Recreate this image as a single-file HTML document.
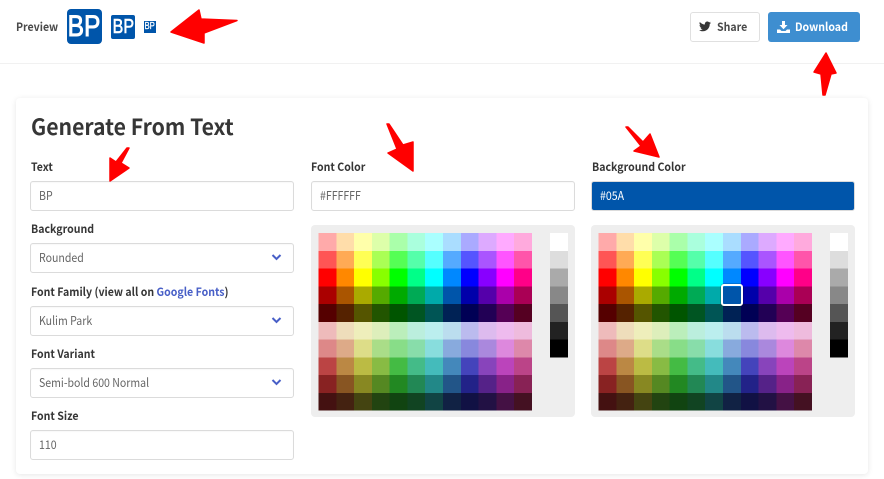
<!DOCTYPE html>
<html><head><meta charset="utf-8">
<style>
html,body{margin:0;padding:0;background:#fff;}
body{width:884px;height:479px;overflow:hidden;position:relative;font-family:"Noto Sans CJK JP","Liberation Sans",sans-serif;color:#363636;}
.a{position:absolute;white-space:nowrap;}
.l,.b{position:absolute;font-size:11.500px;font-weight:700;line-height:16px;color:#363636;white-space:nowrap;transform:scaleX(.92);transform-origin:0 50%;}
.i{position:absolute;box-sizing:border-box;width:263.500px;height:30px;border:1px solid #dbdbdb;border-radius:3px;background:#fff;font-size:12px;line-height:28px;padding-left:8px;color:#666;white-space:nowrap;box-shadow:inset 0 1px 1px rgba(10,10,10,.03);}
.i span{display:inline-block;transform:scaleX(.88);transform-origin:0 50%;}
.logo{position:absolute;background:#05a;color:#fff;font-family:"Liberation Sans",sans-serif;display:flex;align-items:center;justify-content:center;overflow:hidden;}
.logo span{display:block;}
.card{position:absolute;left:16px;top:98px;width:852px;height:376px;background:#fff;border-radius:4px;box-shadow:0 1px 6px rgba(10,10,10,.10);}
.pal{position:absolute;width:264px;height:192px;}
.chev{position:absolute;left:239.500px;top:9px;}
</style></head>
<body>
<div class="a" style="left:0;top:63px;width:884px;height:1px;background:#f1f1f1"></div>
<div class="b" style="left:16px;top:19px;color:#4a4a4a">Preview</div>
<div class="logo" style="left:67px;top:9px;width:35px;height:35px;border-radius:4px;font-size:30px;line-height:35px"><span style="transform:scaleX(.82);-webkit-text-stroke:.9px #fff">BP</span></div>
<div class="logo" style="left:111px;top:15px;width:24px;height:24px;border-radius:2px;font-size:20px;line-height:24px"><span style="transform:scaleX(.8);-webkit-text-stroke:.6px #fff">BP</span></div>
<div class="logo" style="left:144px;top:21px;width:12px;height:12px;font-size:10px;line-height:12px"><span style="transform:scaleX(.78);-webkit-text-stroke:.3px #fff">BP</span></div>

<div class="a" style="left:690px;top:12px;width:70px;height:30px;box-sizing:border-box;border:1px solid #e0e0e0;border-radius:3px;background:#fff"></div>
<svg class="a" style="left:699px;top:21px" width="12" height="11" viewBox="0 0 24 20"><path fill="#363636" d="M24 2.400c-.9.400-1.800.700-2.800.800 1-.6 1.800-1.600 2.200-2.700-1 .6-2 1-3.100 1.200C19.300.7 18 0 16.600 0c-2.700 0-4.900 2.200-4.900 4.900 0 .4 0 .8.100 1.100C7.700 5.800 4.100 3.900 1.700.9c-.4.700-.7 1.600-.7 2.500 0 1.700.9 3.200 2.200 4.100-.8 0-1.600-.2-2.200-.6v.1c0 2.400 1.700 4.400 3.900 4.800-.4.100-.8.200-1.300.2-.3 0-.6 0-.9-.1.600 2 2.400 3.400 4.600 3.400-1.700 1.300-3.800 2.100-6.100 2.100-.4 0-.8 0-1.200-.1C2.200 18.800 4.800 19.600 7.500 19.600c9.100 0 14-7.500 14-14v-.6c1-.7 1.800-1.600 2.500-2.600z"/></svg>
<div class="b" style="left:717px;top:19px;color:#4a4a4a">Share</div>

<div class="a" style="left:768px;top:12px;width:92px;height:30px;border-radius:3px;background:#3e8ed0"></div>
<svg class="a" style="left:777px;top:21px" width="13" height="12" viewBox="0 0 13 12"><path fill="#fff" d="M5 0h3v4h2.500L6.500 8.200 2.500 4H5zM0 8.500h3l1.500 1.500h4L10 8.500h3V12H0z"/></svg>
<div class="b" style="left:795px;top:19px;color:#fff">Download</div>

<div class="card"></div>
<div class="a" style="left:31px;top:111px;font-size:22px;font-weight:700;line-height:30px;color:#363636;transform:scaleX(.963);transform-origin:0 50%">Generate From Text</div>

<div class="l" style="left:31px;top:159px">Text</div>
<div class="i" style="left:30px;top:181px"><span>BP</span></div>
<div class="l" style="left:31px;top:221px">Background</div>
<div class="i" style="left:30px;top:243px"><span>Rounded</span><svg class="chev" width="11" height="9" viewBox="0 0 11 9"><path d="M1.500 2l4 4 4-4" fill="none" stroke="#485fc7" stroke-width="2"/></svg></div>
<div class="l" style="left:31px;top:284px">Font Family (view all on <span style="color:#485fc7">Google Fonts</span>)</div>
<div class="i" style="left:30px;top:305.500px"><span>Kulim Park</span><svg class="chev" width="11" height="9" viewBox="0 0 11 9"><path d="M1.500 2l4 4 4-4" fill="none" stroke="#485fc7" stroke-width="2"/></svg></div>
<div class="l" style="left:31px;top:346px">Font Variant</div>
<div class="i" style="left:30px;top:368px"><span>Semi-bold 600 Normal</span><svg class="chev" width="11" height="9" viewBox="0 0 11 9"><path d="M1.500 2l4 4 4-4" fill="none" stroke="#485fc7" stroke-width="2"/></svg></div>
<div class="l" style="left:31px;top:408px">Font Size</div>
<div class="i" style="left:30px;top:430px"><span>110</span></div>

<div class="l" style="left:311px;top:159px">Font Color</div>
<div class="i" style="left:311px;top:181px"><span>#FFFFFF</span></div>
<div class="l" style="left:591.500px;top:159px">Background Color</div>
<div class="i" style="left:591px;top:181px;background:#05a;border-color:#dbdbdb;color:#fff;box-shadow:none"><span>#05A</span></div>

<svg width="0" height="0" style="position:absolute">
<symbol id="p" viewBox="0 0 264 192" overflow="visible">
<rect x="0" y="0" width="264" height="192" rx="4" fill="#eee"/>
<g transform="translate(7.500,8) scale(17.79,17.77)" shape-rendering="crispEdges">
<g transform="translate(0,0)"><rect x="0" width="1.020" height="1.020" fill="#faa"/><rect x="1" width="1.020" height="1.020" fill="#fda"/><rect x="2" width="1.020" height="1.020" fill="#ffa"/><rect x="3" width="1.020" height="1.020" fill="#dfa"/><rect x="4" width="1.020" height="1.020" fill="#afa"/><rect x="5" width="1.020" height="1.020" fill="#afd"/><rect x="6" width="1.020" height="1.020" fill="#aff"/><rect x="7" width="1.020" height="1.020" fill="#adf"/><rect x="8" width="1.020" height="1.020" fill="#aaf"/><rect x="9" width="1.020" height="1.020" fill="#daf"/><rect x="10" width="1.020" height="1.020" fill="#faf"/><rect x="11" width="1" height="1.020" fill="#fad"/></g>
<g transform="translate(0,1)"><rect x="0" width="1.020" height="1.020" fill="#f55"/><rect x="1" width="1.020" height="1.020" fill="#fa5"/><rect x="2" width="1.020" height="1.020" fill="#ff5"/><rect x="3" width="1.020" height="1.020" fill="#af5"/><rect x="4" width="1.020" height="1.020" fill="#5f5"/><rect x="5" width="1.020" height="1.020" fill="#5fa"/><rect x="6" width="1.020" height="1.020" fill="#5ff"/><rect x="7" width="1.020" height="1.020" fill="#5af"/><rect x="8" width="1.020" height="1.020" fill="#55f"/><rect x="9" width="1.020" height="1.020" fill="#a5f"/><rect x="10" width="1.020" height="1.020" fill="#f5f"/><rect x="11" width="1" height="1.020" fill="#f5a"/></g>
<g transform="translate(0,2)"><rect x="0" width="1.020" height="1.020" fill="#f00"/><rect x="1" width="1.020" height="1.020" fill="#f80"/><rect x="2" width="1.020" height="1.020" fill="#ff0"/><rect x="3" width="1.020" height="1.020" fill="#8f0"/><rect x="4" width="1.020" height="1.020" fill="#0f0"/><rect x="5" width="1.020" height="1.020" fill="#0f8"/><rect x="6" width="1.020" height="1.020" fill="#0ff"/><rect x="7" width="1.020" height="1.020" fill="#08f"/><rect x="8" width="1.020" height="1.020" fill="#00f"/><rect x="9" width="1.020" height="1.020" fill="#80f"/><rect x="10" width="1.020" height="1.020" fill="#f0f"/><rect x="11" width="1" height="1.020" fill="#f08"/></g>
<g transform="translate(0,3)"><rect x="0" width="1.020" height="1.020" fill="#a00"/><rect x="1" width="1.020" height="1.020" fill="#a50"/><rect x="2" width="1.020" height="1.020" fill="#aa0"/><rect x="3" width="1.020" height="1.020" fill="#5a0"/><rect x="4" width="1.020" height="1.020" fill="#0a0"/><rect x="5" width="1.020" height="1.020" fill="#0a5"/><rect x="6" width="1.020" height="1.020" fill="#0aa"/><rect x="7" width="1.020" height="1.020" fill="#05a"/><rect x="8" width="1.020" height="1.020" fill="#00a"/><rect x="9" width="1.020" height="1.020" fill="#50a"/><rect x="10" width="1.020" height="1.020" fill="#a0a"/><rect x="11" width="1" height="1.020" fill="#a05"/></g>
<g transform="translate(0,4)"><rect x="0" width="1.020" height="1.020" fill="#500"/><rect x="1" width="1.020" height="1.020" fill="#520"/><rect x="2" width="1.020" height="1.020" fill="#550"/><rect x="3" width="1.020" height="1.020" fill="#250"/><rect x="4" width="1.020" height="1.020" fill="#050"/><rect x="5" width="1.020" height="1.020" fill="#052"/><rect x="6" width="1.020" height="1.020" fill="#055"/><rect x="7" width="1.020" height="1.020" fill="#025"/><rect x="8" width="1.020" height="1.020" fill="#005"/><rect x="9" width="1.020" height="1.020" fill="#205"/><rect x="10" width="1.020" height="1.020" fill="#505"/><rect x="11" width="1" height="1.020" fill="#502"/></g>
<g transform="translate(0,5)"><rect x="0" width="1.020" height="1.020" fill="#ebb"/><rect x="1" width="1.020" height="1.020" fill="#edb"/><rect x="2" width="1.020" height="1.020" fill="#eeb"/><rect x="3" width="1.020" height="1.020" fill="#deb"/><rect x="4" width="1.020" height="1.020" fill="#beb"/><rect x="5" width="1.020" height="1.020" fill="#bed"/><rect x="6" width="1.020" height="1.020" fill="#bee"/><rect x="7" width="1.020" height="1.020" fill="#bde"/><rect x="8" width="1.020" height="1.020" fill="#bbe"/><rect x="9" width="1.020" height="1.020" fill="#dbe"/><rect x="10" width="1.020" height="1.020" fill="#ebe"/><rect x="11" width="1" height="1.020" fill="#ebd"/></g>
<g transform="translate(0,6)"><rect x="0" width="1.020" height="1.020" fill="#d88"/><rect x="1" width="1.020" height="1.020" fill="#da8"/><rect x="2" width="1.020" height="1.020" fill="#dd8"/><rect x="3" width="1.020" height="1.020" fill="#ad8"/><rect x="4" width="1.020" height="1.020" fill="#8d8"/><rect x="5" width="1.020" height="1.020" fill="#8da"/><rect x="6" width="1.020" height="1.020" fill="#8dd"/><rect x="7" width="1.020" height="1.020" fill="#8ad"/><rect x="8" width="1.020" height="1.020" fill="#88d"/><rect x="9" width="1.020" height="1.020" fill="#a8d"/><rect x="10" width="1.020" height="1.020" fill="#d8d"/><rect x="11" width="1" height="1.020" fill="#d8a"/></g>
<g transform="translate(0,7)"><rect x="0" width="1.020" height="1.020" fill="#b44"/><rect x="1" width="1.020" height="1.020" fill="#b84"/><rect x="2" width="1.020" height="1.020" fill="#bb4"/><rect x="3" width="1.020" height="1.020" fill="#8b4"/><rect x="4" width="1.020" height="1.020" fill="#4b4"/><rect x="5" width="1.020" height="1.020" fill="#4b8"/><rect x="6" width="1.020" height="1.020" fill="#4bb"/><rect x="7" width="1.020" height="1.020" fill="#48b"/><rect x="8" width="1.020" height="1.020" fill="#44b"/><rect x="9" width="1.020" height="1.020" fill="#84b"/><rect x="10" width="1.020" height="1.020" fill="#b4b"/><rect x="11" width="1" height="1.020" fill="#b48"/></g>
<g transform="translate(0,8)"><rect x="0" width="1.020" height="1.020" fill="#822"/><rect x="1" width="1.020" height="1.020" fill="#852"/><rect x="2" width="1.020" height="1.020" fill="#882"/><rect x="3" width="1.020" height="1.020" fill="#582"/><rect x="4" width="1.020" height="1.020" fill="#282"/><rect x="5" width="1.020" height="1.020" fill="#285"/><rect x="6" width="1.020" height="1.020" fill="#288"/><rect x="7" width="1.020" height="1.020" fill="#258"/><rect x="8" width="1.020" height="1.020" fill="#228"/><rect x="9" width="1.020" height="1.020" fill="#528"/><rect x="10" width="1.020" height="1.020" fill="#828"/><rect x="11" width="1" height="1.020" fill="#825"/></g>
<g transform="translate(0,9)"><rect x="0" width="1.020" height="1" fill="#411"/><rect x="1" width="1.020" height="1" fill="#421"/><rect x="2" width="1.020" height="1" fill="#441"/><rect x="3" width="1.020" height="1" fill="#241"/><rect x="4" width="1.020" height="1" fill="#141"/><rect x="5" width="1.020" height="1" fill="#142"/><rect x="6" width="1.020" height="1" fill="#144"/><rect x="7" width="1.020" height="1" fill="#124"/><rect x="8" width="1.020" height="1" fill="#114"/><rect x="9" width="1.020" height="1" fill="#214"/><rect x="10" width="1.020" height="1" fill="#414"/><rect x="11" width="1" height="1" fill="#412"/></g>
</g>
<g transform="translate(239,8)" shape-rendering="crispEdges">
<rect width="18" height="18" fill="#fff"/><rect y="17.800" width="18" height="18" fill="#ddd"/><rect y="35.500" width="18" height="18" fill="#aaa"/><rect y="53.300" width="18" height="18" fill="#888"/><rect y="71.100" width="18" height="18" fill="#555"/><rect y="88.800" width="18" height="18" fill="#222"/><rect y="106.600" width="18" height="18" fill="#000"/>
</g>
</symbol>
</svg>
<svg class="pal" style="left:311px;top:225px" viewBox="0 0 264 192"><use href="#p" width="264" height="192"/></svg>
<svg class="pal" style="left:591px;top:225px" viewBox="0 0 264 192"><use href="#p" width="264" height="192"/></svg>
<div class="a" style="left:721px;top:284px;width:22px;height:22px;box-sizing:border-box;border:2px solid #fff;border-radius:3px;box-shadow:0 0 1px #000"></div>

<svg class="a" style="left:0;top:0" width="884" height="479" viewBox="0 0 884 479">
<g fill="#f00" stroke="#f00" stroke-width="1.500" stroke-linejoin="round">
<polygon points="171,32 199,10 201,19 237,20.500 204,33 204,43"/>
<polygon points="826,53 814,72 821,74 823,95 825,95 831,74 836,73"/>
<polygon points="110,181 129,168 121,163 129,148 127,148 116,162 110,158"/>
<polygon points="387,124 389,124 403,145 413,142 413,171 388,153 397,149"/>
<polygon points="626,127 628,127 643,142 650,134 659,157 634,151 641,146"/>
</g>
</svg>
</body></html>
